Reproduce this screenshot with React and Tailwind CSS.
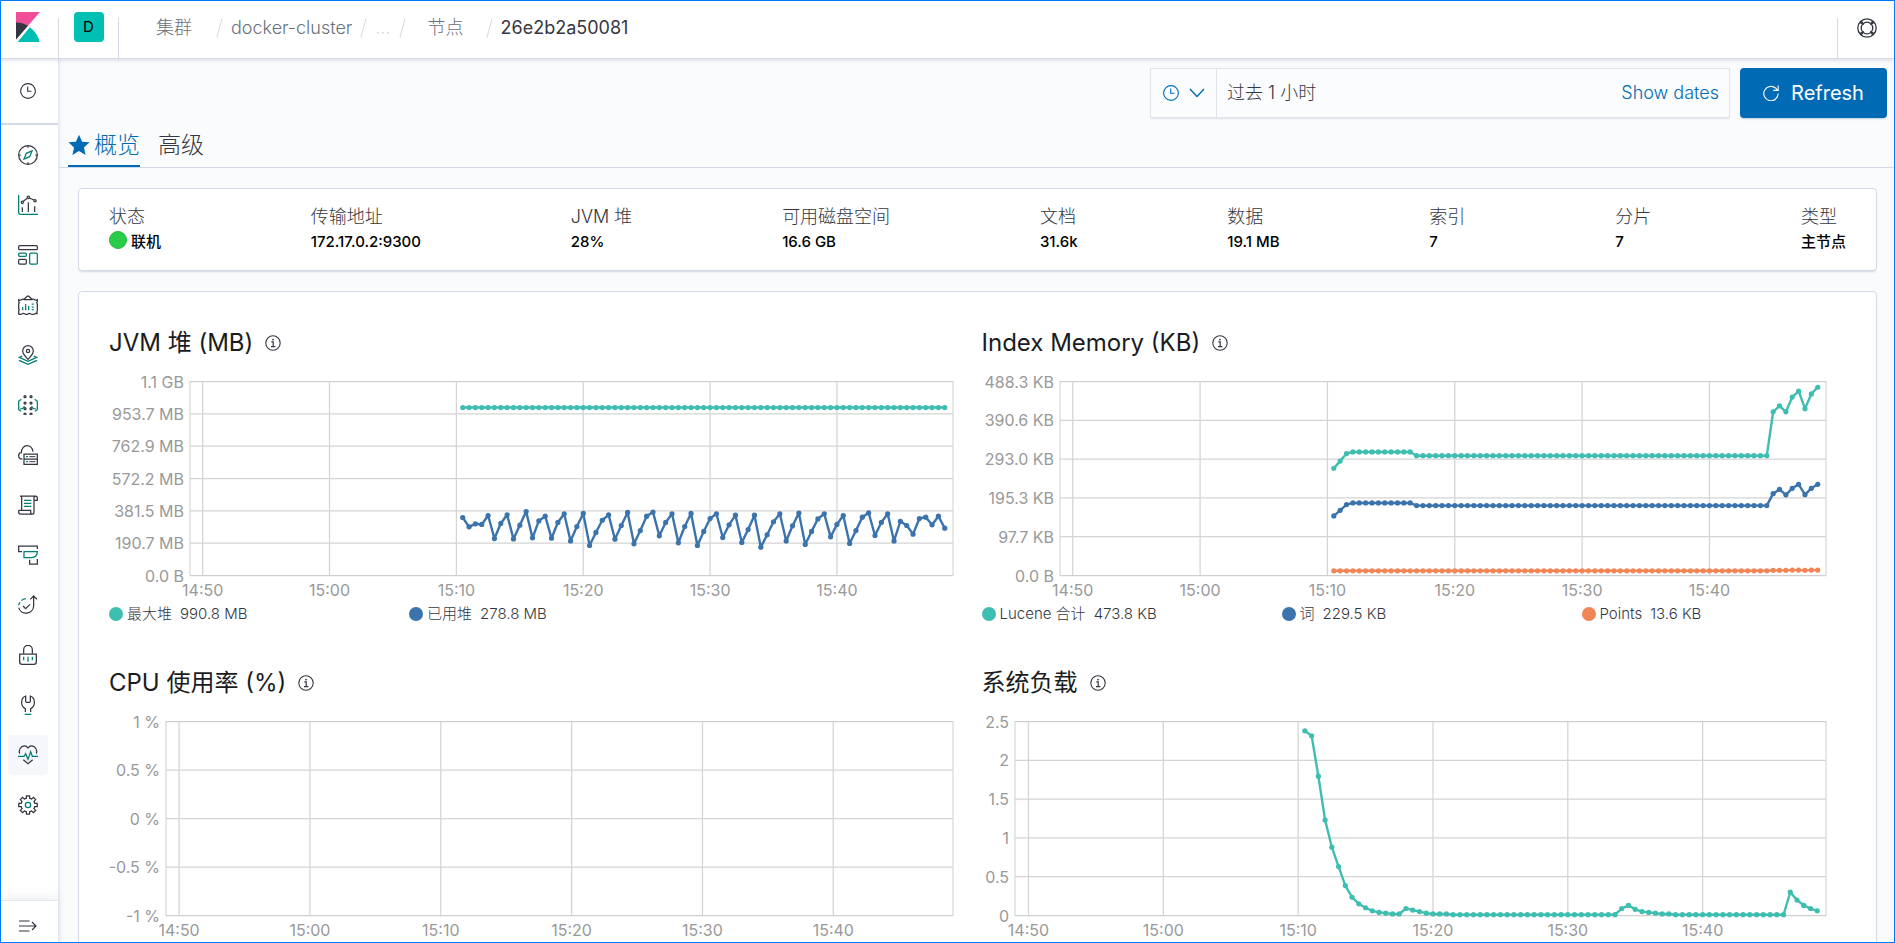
import { useLayoutEffect, useRef, useState } from 'react';

const INK = '#343741';
const TEAL = '#017d73';

const HEAP_USED = [
  342, 287, 305, 301, 354, 218, 307, 358, 216, 297, 377, 222, 322, 350, 220, 313, 364, 204, 289, 366, 177, 254, 326,
  358, 214, 295, 372, 187, 265, 350, 374, 234, 313, 364, 193, 289, 366, 177, 260, 336, 364, 224, 299, 356, 195, 271,
  356, 167, 240, 317, 364, 204, 293, 368, 183, 260, 334, 364, 228, 301, 354, 189, 265, 344, 370, 236, 313, 364, 204,
  320, 295, 244, 336, 344, 299, 350, 279,
];
const fill = (n, v) => Array(n).fill(v);

const CHARTS = [
  {
    title: 'JVM 堆 (MB)',
    gutter: 81,
    max: 1144.4,
    yLabels: ['1.1 GB', '953.7 MB', '762.9 MB', '572.2 MB', '381.5 MB', '190.7 MB', '0.0 B'],
    series: [
      { name: '最大堆', value: '990.8 MB', color: '#3ebeb0', data: fill(77, 990.8) },
      { name: '已用堆', value: '278.8 MB', color: '#3b73ac', data: HEAP_USED },
    ],
  },
  {
    title: 'Index Memory (KB)',
    gutter: 78,
    max: 488.3,
    yLabels: ['488.3 KB', '390.6 KB', '293.0 KB', '195.3 KB', '97.7 KB', '0.0 B'],
    series: [
      {
        name: 'Lucene 合计',
        value: '473.8 KB',
        color: '#3ebeb0',
        data: [270, 288, 307, ...fill(10, 311), ...fill(56, 301.5), 412, 427, 412, 449, 464, 420, 457, 473.8],
      },
      {
        name: '词',
        value: '229.5 KB',
        color: '#3b73ac',
        data: [150, 164, 178.5, ...fill(10, 182.6), ...fill(56, 176), 206, 217, 203, 219.5, 229.5, 203.5, 219.5, 229.5],
      },
      {
        name: 'Points',
        value: '13.6 KB',
        color: '#f08656',
        data: [...fill(69, 11.8), 13, 13, 13, 13.6, 13.6, 13, 13.6, 13.6],
      },
    ],
  },
  {
    title: 'CPU 使用率 (%)',
    gutter: 57,
    max: 1,
    yLabels: ['1 %', '0.5 %', '0 %', '-0.5 %', '-1 %'],
    series: [],
  },
  {
    title: '系统负载',
    gutter: 33,
    max: 2.5,
    yLabels: ['2.5', '2', '1.5', '1', '0.5', '0'],
    series: [
      {
        color: '#3ebeb0',
        data: [
          2.38, 2.315, 1.795, 1.23, 0.88, 0.63, 0.385, 0.235, 0.15, 0.1, 0.06, 0.04, 0.03, 0.02, 0.02, 0.09, 0.07, 0.05,
          0.03, 0.02, 0.02, 0.02, ...fill(25, 0.01), 0.09, 0.13, 0.08, 0.05, 0.04, 0.03, 0.02, 0.02, ...fill(17, 0.01),
          0.3, 0.2, 0.13, 0.09, 0.06,
        ],
      },
    ],
  },
];

const TIMES = ['14:50', '15:00', '15:10', '15:20', '15:30', '15:40'];

const STATS = [
  ['状态', '联机'],
  ['传输地址', '172.17.0.2:9300'],
  ['JVM 堆', '28%'],
  ['可用磁盘空间', '16.6 GB'],
  ['文档', '31.6k'],
  ['数据', '19.1 MB'],
  ['索引', '7'],
  ['分片', '7'],
  ['类型', '主节点'],
];

/* ---------- icons ---------- */

const gearPath = (() => {
  const pts = [];
  for (let i = 0; i < 8; i++) {
    const a = (i * Math.PI) / 4;
    for (const [d, r] of [[-0.24, 21], [-0.17, 28], [0.17, 28], [0.24, 21]]) {
      pts.push(`${(30 + r * Math.sin(a + d)).toFixed(1)} ${(30 - r * Math.cos(a + d)).toFixed(1)}`);
    }
  }
  return `M${pts.join('L')}Z`;
})();

function AppIcon({ children }) {
  return (
    <svg viewBox="0 0 60 60" className="size-5" fill="none" stroke={INK} strokeWidth="3.75" aria-hidden="true">
      {children}
    </svg>
  );
}

const NAV = [
  ['Discover', (
    <>
      <circle cx="30" cy="30" r="28" />
      <path d="M30 2v6M30 52v6M2 30h6M52 30h6" />
      <path stroke={TEAL} d="M42 18L35 35L18 42L25 25Z" />
    </>
  )],
  ['Visualize', (
    <>
      <path stroke={TEAL} d="M2 0V53Q2 58 7 58H60" />
      <circle cx="13" cy="22" r="3.5" />
      <circle cx="31" cy="7" r="3.5" />
      <circle cx="51" cy="17" r="3.5" />
      <path d="M16 19L28 10M34 9L48 15M13 37V51M31 22V51M50 34V51" />
    </>
  )],
  ['Dashboard', (
    <>
      <rect x="2" y="2" width="56" height="12" rx="3" />
      <rect x="2" y="24" width="23" height="10" rx="3" stroke={TEAL} />
      <rect x="2" y="43" width="23" height="14" rx="3" />
      <rect x="35" y="24" width="23" height="33" rx="3" stroke={TEAL} />
    </>
  )],
  ['Canvas', (
    <>
      <path d="M2 14Q6 17 10 14Q14 11 19 14H41Q46 11 50 14Q54 17 58 14V20Q55 23 58 27V47Q55 50 58 57Q54 53 49 57Q44 60 39 57Q34 53 30 57Q26 60 21 57Q16 53 11 57Q6 60 2 57V48Q5 45 2 41V27Q5 24 2 20Z" />
      <path d="M18 13L28 4Q30 2 32 4L42 13" />
      <path stroke={TEAL} d="M14 36v10M23 27v19M32 32v14M41 27h6M41 36h6M41 44h6" />
    </>
  )],
  ['Maps', (
    <>
      <path d="M30 43C20 33 14 26 14 18A16 16 0 0 1 46 18C46 26 40 33 30 43Z" />
      <circle cx="30" cy="18" r="5" />
      <path stroke={TEAL} d="M13 33L4 37L30 49L56 37L47 33M3 46L30 58L57 46" />
    </>
  )],
  ['Machine Learning', (
    <>
      {[5, 24, 41, 57].map((y) => (
        <g key={y}>
          <circle cx="21" cy={y} r="3" />
          <circle cx="39" cy={y} r="3" />
        </g>
      ))}
      <path stroke={TEAL} d="M10 13L4 17Q2 18 2 21V44L9 49M6 42Q18 41 19 33M50 13L56 17Q58 18 58 21V44L51 49M54 42Q42 41 41 33" />
    </>
  )],
  ['Infrastructure', (
    <>
      <path d="M13 42C5 42 2 37 2 32C2 27 6 23 10 23C10 10 18 2 27 2C36 2 43 9 45 20" />
      <path d="M18 27H58V58H18ZM18 42.5H58" />
      <path d="M34 35H52M34 50H52" strokeWidth="3" />
      <path stroke={TEAL} d="M24 35h6M24 50h6" strokeWidth="4" />
    </>
  )],
  ['Logs', (
    <>
      <path d="M11 46V8Q11 3 6 3H52Q58 3 58 9V16H48M48 16V9Q48 3 53 3M48 16V51" />
      <path d="M2 46H38V52Q38 57 43 57Q48 57 48 51M2 46V52Q2 57 8 57H43" />
      <path stroke={TEAL} d="M18 16H40M18 25H40M18 34H40" />
    </>
  )],
  ['APM', (
    <>
      <path d="M12 20H2V3H58V12" />
      <path stroke={TEAL} d="M18 20H58Q57 38 39 38H18Z" />
      <path d="M35 44V57H58V42" />
    </>
  )],
  ['Uptime', (
    <>
      <path d="M2 38A23 23 0 0 0 47 33V3M37 13L47 3L57 13" />
      <path stroke={TEAL} d="M2 31Q3 25 6 21M10 17Q15 12 24 11" />
      <path d="M15 33L23 41L36 28" />
    </>
  )],
  ['SIEM', (
    <>
      <path d="M17 26V14A13 13 0 0 1 43 14V26" />
      <path d="M5 27H55V50Q55 58 47 58H13Q5 58 5 50Z" />
      <path stroke={TEAL} d="M17 35V46M30 35V50M43 35V46" />
    </>
  )],
  ['Dev Tools', (
    <>
      <path d="M22 51V41C6 34 8 8 23 3V19Q23 22 26 22H34Q37 22 37 19V3C52 8 54 34 38 41V51" />
      <path stroke={TEAL} d="M20 58H40" />
    </>
  )],
  ['Stack Monitoring', (
    <>
      <path d="M5 26C-1 8 20 -5 30 9C40 -5 61 8 55 26M16 44L30 56L44 44" />
      <path stroke={TEAL} d="M0 34H18L23 26L30 43L38 20L43 34H60" />
    </>
  )],
  ['Management', (
    <>
      <path d={gearPath} />
      <circle cx="30" cy="30" r="8" stroke={TEAL} />
    </>
  )],
];

function ClockIcon() {
  return (
    <svg viewBox="0 0 16 16" className="size-4" fill="none" stroke="currentColor" strokeWidth="1.1" aria-hidden="true">
      <circle cx="8" cy="8" r="7.4" />
      <path d="M7.7 3.6V8.3H11.4" />
    </svg>
  );
}

function InfoIcon() {
  return (
    <svg viewBox="0 0 16 16" className="size-4" fill="none" stroke={INK} aria-hidden="true">
      <circle cx="8" cy="8" r="7.2" strokeWidth="1.1" />
      <path d="M6.3 6.9H8.2V11.4M6 11.6H10.4" strokeWidth="1.2" />
      <circle cx="8" cy="4.6" r="0.9" fill={INK} stroke="none" />
    </svg>
  );
}

function HelpIcon() {
  return (
    <svg viewBox="0 0 20 20" className="size-5" fill="none" stroke={INK} strokeWidth="1.3" aria-hidden="true">
      <circle cx="10" cy="10" r="9.2" />
      <circle cx="10" cy="10" r="5.8" />
      <path d="M3 4.4L6.6 6.6M4.4 3L6.6 6.6M17 4.4L13.4 6.6M15.6 3L13.4 6.6M3 15.6L6.6 13.4M4.4 17L6.6 13.4M17 15.6L13.4 13.4M15.6 17L13.4 13.4" />
    </svg>
  );
}

function KibanaLogo() {
  return (
    <svg viewBox="0 0 24 30" className="h-[30px] w-6" aria-hidden="true">
      <path fill="#f04e98" d="M0 0H24L0 27.5Z" />
      <path fill="#343741" d="M0 10.5C4.4 10.5 8.4 11.7 11.9 13.8L0 27.5Z" />
      <path fill="#00bfb3" d="M13.9 15.2L1.6 30H23.6C22.3 24 18.8 18.8 13.9 15.2Z" />
    </svg>
  );
}

/* ---------- charts ---------- */

function Plot({ chart }) {
  const box = useRef(null);
  const [width, setWidth] = useState(864);

  useLayoutEffect(() => {
    const measure = () => setWidth(box.current.clientWidth);
    measure();
    const observer = new ResizeObserver(measure);
    observer.observe(box.current);
    return () => observer.disconnect();
  }, []);

  const top = 11.5;
  const bottom = 205.5;
  const left = chart.gutter;
  const right = width - 21;
  const minute = (right - left) / 60.15;
  const rows = chart.yLabels.length - 1;
  const firstTick = left + minute;
  const px = (i) => left + minute * 21.5 + (i * minute) / 2;
  const py = (v) => bottom - (v / chart.max) * (bottom - top);

  return (
    <div ref={box} className="h-[232px]">
      <svg width={width} height="232" className="block overflow-visible" role="img" aria-label={chart.title}>
        <g stroke="#d4d4d4" strokeWidth="1.25">
          {TIMES.map((t, i) => (
            <path key={t} d={`M${firstTick + i * minute * 10} ${top}V${bottom}`} />
          ))}
          {chart.yLabels.map((t, i) => (
            <path key={t} d={`M${left} ${top + ((bottom - top) * i) / rows}H${right}`} />
          ))}
        </g>
        <rect x={left} y={top} width={right - left} height={bottom - top} fill="none" stroke="#cfcfcf" />
        <g fill="#999999" fontSize="16">
          {chart.yLabels.map((t, i) => (
            <text key={t} x={left - 6} y={top + ((bottom - top) * i) / rows + 6} textAnchor="end">
              {t}
            </text>
          ))}
          {TIMES.map((t, i) => (
            <text key={t} x={firstTick + i * minute * 10} y="226" textAnchor="middle">
              {t}
            </text>
          ))}
        </g>
        {chart.series.map((s, n) => (
          <g key={n} fill={s.color}>
            <polyline
              points={s.data.map((v, i) => `${px(i)},${py(v)}`).join(' ')}
              fill="none"
              stroke={s.color}
              strokeWidth="2.4"
              strokeLinejoin="round"
            />
            {s.data.map((v, i) => (
              <circle key={i} cx={px(i)} cy={py(v)} r="2.6" />
            ))}
          </g>
        ))}
      </svg>
    </div>
  );
}

function ChartCard({ chart }) {
  return (
    <section>
      <div className="mb-3 flex h-[30px] items-center gap-3">
        <h2 className="text-2xl leading-[30px] text-[#1a1c21]">{chart.title}</h2>
        <button type="button" aria-label="Info">
          <InfoIcon />
        </button>
      </div>
      <Plot chart={chart} />
      <ul className="flex h-6 items-center text-[15px] font-light text-[#343741]">
        {chart.series.filter((s) => s.name).map((s) => (
          <li key={s.name} className="flex w-[300px] shrink-0 items-center">
            <span className="mr-1 size-[14px] rounded-full" style={{ backgroundColor: s.color }} />
            <span className="mr-2">{s.name}</span>
            <span>{s.value}</span>
          </li>
        ))}
      </ul>
    </section>
  );
}

/* ---------- page ---------- */

function Slash() {
  return <span className="mx-[11px] h-5 w-px rotate-[15deg] bg-[#d3dae6]" />;
}

function Header() {
  return (
    <header className="relative z-10 flex h-[58px] shrink-0 border-b border-[#d3dae6] bg-white shadow-[0_2px_3px_rgba(152,162,179,0.25)]">
      <div className="flex w-[58px] flex-col justify-end">
        <a href="#home" aria-label="Kibana" className="flex h-10 items-start border-r border-[#d3dae6] pl-[15px]">
          <span className="-mt-1.5">
            <KibanaLogo />
          </span>
        </a>
      </div>
      <div className="flex w-[60px] flex-col justify-end">
        <div className="flex h-10 justify-center border-r border-[#d3dae6]">
          <button type="button" className="-mt-1.5 size-[30px] rounded bg-[#00bfb3] text-[15px] text-black">
            D
          </button>
        </div>
      </div>
      <nav className="flex h-[54px] flex-1 items-center pl-[37px] text-lg font-light text-[#69707d]">
        <a href="#clusters" className="pr-4">集群</a>
        <Slash />
        <a href="#cluster">docker-cluster</a>
        <Slash />
        <span className="text-[#d3dae6]">…</span>
        <Slash />
        <a href="#nodes" className="px-[14px]">节点</a>
        <Slash />
        <span className="font-normal text-[#343741]">26e2b2a50081</span>
      </nav>
      <div className="flex w-[57px] flex-col justify-end">
        <div className="flex h-10 items-start border-l border-[#d3dae6] pl-[19px]">
          <button type="button" aria-label="Help">
            <HelpIcon />
          </button>
        </div>
      </div>
    </header>
  );
}

function Sidebar() {
  return (
    <aside className="flex w-[58px] shrink-0 flex-col border-r border-[#e3e8f0] bg-white shadow-[1px_0_3px_rgba(152,162,179,0.2)]">
      <div className="flex h-[66px] items-center justify-center border-b-2 border-[#d3dae6] pr-1 text-[#343741]">
        <button type="button" aria-label="Recently viewed">
          <ClockIcon />
        </button>
      </div>
      <nav className="flex flex-1 flex-col items-center gap-2.5 overflow-hidden pt-2.5 pr-1">
        {NAV.map(([label, icon]) => (
          <a
            key={label}
            href="#app"
            aria-label={label}
            className={
              label === 'Stack Monitoring'
                ? 'flex size-10 shrink-0 items-center justify-center rounded bg-[#f5f7fa]'
                : 'flex size-10 shrink-0 items-center justify-center'
            }
          >
            <AppIcon>{icon}</AppIcon>
          </a>
        ))}
      </nav>
      <button
        type="button"
        aria-label="Expand navigation"
        className="flex h-[42px] shrink-0 items-center justify-center border-t border-[#e3e8f0] pt-2 pr-1 shadow-[0_-4px_8px_rgba(152,162,179,0.15)]"
      >
        <svg viewBox="0 0 18 12" className="h-3 w-[18px]" fill="none" stroke={INK} strokeWidth="1.2" aria-hidden="true">
          <path d="M0 1H10.5M0 6H17M0 11H10.5M13 2L17 6L13 10" />
        </svg>
      </button>
    </aside>
  );
}

function Toolbar() {
  return (
    <div className="flex justify-end gap-2.5 pt-[9px] pr-[7px]">
      <div className="flex h-[50px] w-[580px] border border-[#dfe3ea] bg-[#fbfcfd] shadow-[0_2px_2px_-1px_rgba(152,162,179,0.3)]">
        <button
          type="button"
          aria-label="Quick select"
          className="flex w-[66px] items-center justify-center gap-2.5 border-r border-[#dfe3ea] text-[#006bb4]"
        >
          <ClockIcon />
          <svg viewBox="0 0 16 10" className="h-2.5 w-4" fill="none" stroke="currentColor" strokeWidth="1.4" aria-hidden="true">
            <path d="M1 1L8 8.5L15 1" />
          </svg>
        </button>
        <button type="button" className="flex flex-1 items-center justify-between px-2.5 text-lg font-light text-[#343741]">
          <span>过去 1 小时</span>
          <span className="text-[#006bb4]">Show dates</span>
        </button>
      </div>
      <button
        type="button"
        className="flex h-[50px] w-[147px] items-center justify-center gap-3 rounded bg-[#006bb4] text-xl text-white shadow-[0_2px_2px_-1px_rgba(54,97,126,0.3)]"
      >
        <svg viewBox="0 0 16 16" className="size-4" fill="none" stroke="currentColor" strokeWidth="1.1" aria-hidden="true">
          <path d="M15.2 8.6A7.2 7.2 0 1 1 12.8 3.2L14.4 5.1M15.2 0.4V5.4H10.2" />
        </svg>
        Refresh
      </button>
    </div>
  );
}

export default function App() {
  return (
    <div className="flex h-screen flex-col overflow-hidden border border-[#007bff] bg-[#fafbfd] font-['Inter','Noto_Sans_CJK_SC',sans-serif] text-[#343741]">
      <Header />
      <div className="flex min-h-0 flex-1">
        <Sidebar />
        <main className="min-w-0 flex-1 overflow-y-auto [scrollbar-width:none]">
          <Toolbar />
          <div className="flex h-[50px] items-end gap-[18px] border-b border-[#d3dae6] pl-[9px] text-[23px] font-light">
            <button type="button" className="flex h-[42px] items-center gap-1 border-b-2 border-[#006bb4] text-[#006bb4]">
              <svg viewBox="0 0 20 20" className="size-[22px]" fill="currentColor" aria-hidden="true">
                <path d="M10 0.6L12.8 7L19.6 7.6L14.5 12.2L16 19L10 15.4L4 19L5.5 12.2L0.4 7.6L7.2 7Z" />
              </svg>
              概览
            </button>
            <button type="button" className="h-[42px] pb-0.5">高级</button>
          </div>
          <div className="flex flex-col gap-5 py-5 pr-[17px] pl-[19px]">
            <dl className="flex h-[83px] justify-between rounded border border-[#d3dae6] bg-white px-[30px] pt-[15px] shadow-[0_2px_2px_-1px_rgba(152,162,179,0.4)]">
              {STATS.map(([label, value], i) => (
                <div key={label}>
                  <dt className="text-lg leading-[26px] font-light">{label}</dt>
                  <dd className="flex items-center gap-1 text-[15px] leading-6 font-medium text-black">
                    {i === 0 && <span className="mb-1 size-[18px] rounded-full border border-[#24b83e] bg-[#28cc47]" />}
                    {value}
                  </dd>
                </div>
              ))}
            </dl>
            <div className="grid grid-cols-2 gap-x-2 gap-y-[42px] rounded border border-[#d3dae6] bg-white px-[30px] pt-9 pb-9 shadow-[0_2px_2px_-1px_rgba(152,162,179,0.4)]">
              {CHARTS.map((chart) => (
                <ChartCard key={chart.title} chart={chart} />
              ))}
            </div>
          </div>
        </main>
      </div>
    </div>
  );
}
